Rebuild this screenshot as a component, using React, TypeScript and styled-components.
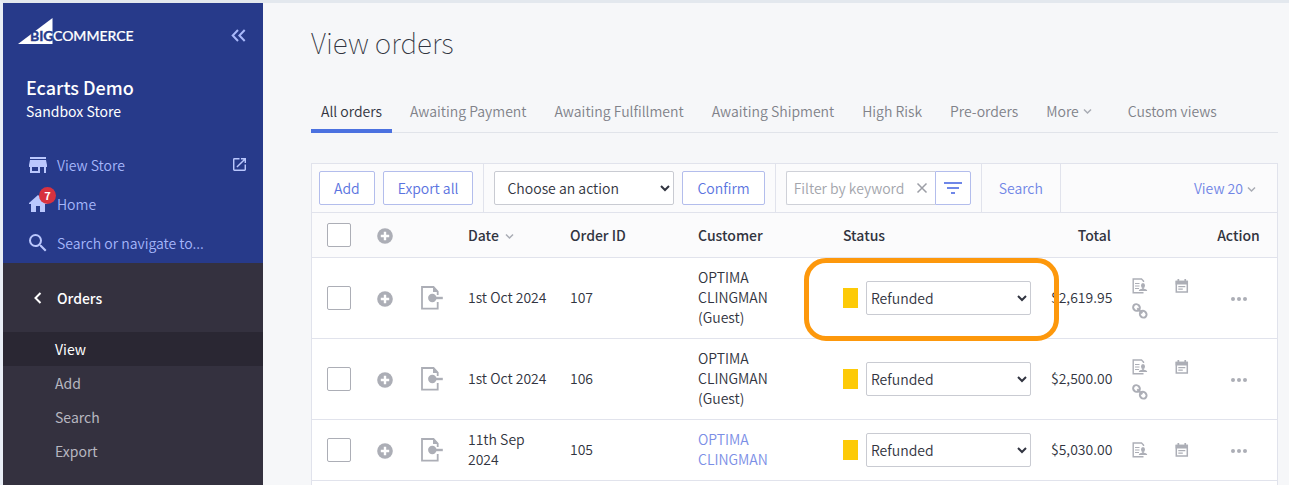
import React from "react";
import styled, { createGlobalStyle } from "styled-components";

const Global = createGlobalStyle`
  *, *::before, *::after { box-sizing: border-box; }
  body {
    margin: 0;
    background: #f6f7f9;
    color: #313440;
    font: 350 14px/20px "Noto Sans CJK JP", "Noto Sans", sans-serif;
  }
  button, input, select { font: inherit; color: inherit; }
  button { cursor: pointer; }
  a { color: inherit; text-decoration: none; }
`;

const Page = styled.div`
  display: flex;
  min-height: 100vh;
  border-top: 3px solid #e3e8ee;
  border-left: 3px solid #e9eef6;
`;

/* Sidebar */
const Sidebar = styled.aside`
  flex: none;
  width: 260px;
  background: #34313f;
  color: #b4baff;
`;
const StorePanel = styled.div`
  height: 260px;
  padding: 15px 15px 0;
  background: #273a8a;
`;
const BrandRow = styled.div`
  display: flex;
  justify-content: space-between;
  align-items: center;
  height: 34px;
  padding-right: 2px;
`;
const IconButton = styled.button`
  display: flex;
  padding: 0;
  border: 0;
  background: none;
  color: #acaeb6;
`;
const StoreName = styled.div`
  padding: 23px 0 0 8px;
  color: #fff;
  font-size: 18px;
  font-weight: 500;
  line-height: 24px;
`;
const StoreKind = styled.div`
  padding-left: 8px;
  color: #fff;
  font-weight: 400;
  line-height: 24px;
`;
const MainNav = styled.nav`
  display: flex;
  flex-direction: column;
  padding-top: 22px;
`;
const NavItem = styled.a`
  display: flex;
  align-items: center;
  gap: 10px;
  height: 39px;
  padding: 0 2px 0 11px;
  color: #a5b6fa;
`;
const NavIcon = styled.span`
  position: relative;
  display: flex;
  color: #bac7fd;
`;
const Grow = styled.span`
  flex: 1;
`;
const Badge = styled.span`
  position: absolute;
  top: -8px;
  left: 10px;
  width: 17px;
  height: 17px;
  border-radius: 50%;
  background: #d8323f;
  color: #fff;
  font-size: 11px;
  font-weight: 700;
  line-height: 17px;
  text-align: center;
`;
const SectionHead = styled.button`
  display: flex;
  align-items: center;
  gap: 13px;
  width: 100%;
  height: 69px;
  padding: 0 30px;
  border: 0;
  background: none;
  color: #fff;
  font-weight: 500;
`;
const SubItem = styled.a<{ $active?: boolean }>`
  display: block;
  padding-left: 52px;
  background: ${(p) => (p.$active ? "#2a2733" : "transparent")};
  color: ${(p) => (p.$active ? "#fff" : "#b7b7c0")};
  font-weight: 400;
  line-height: 34px;
`;

/* Main column */
const Main = styled.main`
  flex: 1;
  min-width: 0;
  display: flex;
  flex-direction: column;
  padding: 19px 11px 0 48px;
`;
const Title = styled.h1`
  margin: 0;
  font-size: 28px;
  font-weight: 100;
  line-height: 40px;
`;
const Tabs = styled.nav`
  display: flex;
  gap: 8px;
  margin: 27px 0 30px;
  border-bottom: 1px solid #e1e4ea;
`;
const Tab = styled.a<{ $active?: boolean; $menu?: boolean }>`
  display: flex;
  align-items: center;
  gap: 4px;
  height: 44px;
  margin-bottom: -1px;
  padding: 3px ${(p) => (p.$menu ? 18 : 10)}px 0 10px;
  border-bottom: 4px solid ${(p) => (p.$active ? "#4b71e0" : "transparent")};
  color: ${(p) => (p.$active ? "#313440" : "#808289")};
  white-space: nowrap;
`;
const Panel = styled.section`
  flex: 1;
  border: 1px solid #e1e3ec;
  border-bottom: 0;
  background: #fff;
`;
const Toolbar = styled.div`
  display: flex;
  height: 49px;
  border-bottom: 1px solid #e1e3ec;
  background: #fbfbfc;
`;
const Group = styled.div<{ $wide?: boolean }>`
  display: flex;
  align-items: center;
  gap: 8px;
  padding: 0 ${(p) => (p.$wide ? 17 : 10)}px;
  border-right: 1px solid #e1e3ec;
  &:first-child { padding-left: 7px; }
  &:last-child { margin-left: auto; padding-right: 21px; border: 0; }
`;
const Button = styled.button`
  height: 34px;
  padding: 0 14px;
  border: 1px solid #b3bdec;
  border-radius: 2px;
  background: #fff;
  color: #5a73e0;
  white-space: nowrap;
`;
const LinkButton = styled.a`
  display: flex;
  align-items: center;
  gap: 4px;
  color: #7186e6;
  white-space: nowrap;
`;
const Select = styled.select<{ $indent?: boolean }>`
  flex: 1;
  min-width: 0;
  width: 100%;
  height: 34px;
  padding: 0 0 0 ${(p) => (p.$indent ? 8 : 0)}px;
  border: 1px solid #c9cbd2;
  border-radius: 2px;
  background: #fff;
`;
const ActionSelect = styled.div`
  display: flex;
  width: 180px;
`;
const Filter = styled.div`
  display: flex;
`;
const FilterField = styled.div`
  display: flex;
  align-items: center;
  width: 149px;
  height: 34px;
  padding: 0 7px;
  border: 1px solid #cfd1d8;
  border-right: 0;
  border-radius: 2px 0 0 2px;
  background: #fff;
`;
const FilterInput = styled.input`
  flex: 1;
  min-width: 0;
  padding: 0;
  border: 0;
  outline: 0;
  background: none;
  &::placeholder { color: #a3a5ac; opacity: 1; }
`;
const FilterButton = styled.button`
  display: grid;
  place-items: center;
  width: 36px;
  height: 34px;
  padding: 0;
  border: 1px solid #b3bdec;
  border-radius: 0 2px 2px 0;
  background: #fff;
  color: #6f87e8;
`;

/* Orders table */
const Table = styled.table`
  width: 100%;
  border-collapse: separate;
  border-spacing: 0;
  table-layout: fixed;
`;
const Cell = styled.td<{ $end?: boolean; $center?: boolean; $roomy?: boolean }>`
  padding: 10px ${(p) => (p.$roomy ? 30 : 10)}px 10px 10px;
  border-bottom: 1px solid #e1e3ec;
  text-align: ${(p) => (p.$end ? "right" : p.$center ? "center" : "left")};
  vertical-align: middle;
`;
const TextCell = styled(Cell)`
  padding-top: 9px;
  padding-bottom: 11px;
`;
const HeadCell = styled(Cell).attrs({ as: "th" })`
  height: 45px;
  background: #fbfbfc;
  font-weight: 500;
`;
const HeadLabel = styled.span`
  display: flex;
  align-items: center;
  gap: 6px;
`;
const Check = styled.input`
  display: block;
  appearance: none;
  width: 24px;
  height: 24px;
  margin: 0 0 0 5px;
  border: 1px solid #acaeb6;
  border-radius: 2px;
  background: #fff;
`;
const ExpandButton = styled(IconButton)`
  padding: 1px 0 0 7px;
`;
const CustomerLink = styled.a`
  color: #7b8ee6;
`;
const StatusBox = styled.div`
  position: relative;
  display: flex;
  align-items: center;
  gap: 8px;
`;
const Swatch = styled.span`
  flex: none;
  width: 15px;
  height: 20px;
  background: #fdca07;
`;
const Highlight = styled.span`
  position: absolute;
  inset: -23px -28px -26px -39px;
  z-index: 1;
  border: 5px solid #fd980c;
  border-radius: 22px;
  pointer-events: none;
`;
const MarkGrid = styled.div`
  display: grid;
  grid-template-columns: 16px 16px;
  align-items: end;
  column-gap: 27px;
  row-gap: 9px;
  padding-left: 1px;
  color: #acaeb6;
`;
const ActionBox = styled.div`
  display: flex;
  justify-content: center;
  padding-top: 2px;
`;

const Chevron = () => (
  <svg width="9" height="9" viewBox="0 0 9 9" fill="none" stroke="#a9acb4" strokeWidth="1.500">
    <path d="M1 3.500L4.500 7 8 3.500" />
  </svg>
);
const LogoSvg = styled.svg`
  align-self: flex-start;
`;
const Logo = () => (
  <LogoSvg width="117" height="27" viewBox="0 0 117 27" role="img" aria-label="BigCommerce">
    <path d="M0 26L34.500 0V26Z" fill="#fff" />
    <text x="12" y="22.500" fontFamily="Lato, sans-serif" fontWeight="700" fontSize="14" fill="#273a8a" stroke="#273a8a" strokeWidth="0.400">BIG</text>
    <text x="35" y="22.500" fontFamily="Lato, sans-serif" fontWeight="500" fontSize="14" fill="#fff" stroke="#fff" strokeWidth="0.200">COMMERCE</text>
  </LogoSvg>
);
const Collapse = () => (
  <svg width="15" height="13" viewBox="0 0 15 13" fill="none" stroke="#a9b9fb" strokeWidth="2">
    <path d="M7 1L1.700 6.500 7 12M13.700 1L8.400 6.500l5.300 5.500" />
  </svg>
);
const StoreIcon = () => (
  <svg width="18" height="18" viewBox="3 3 18 18" fill="currentColor">
    <path d="M20 4H4v2h16V4zm1 10v-2l-1-5H4l-1 5v2h1v6h10v-6h4v6h2v-6h1zm-9 4H6v-4h6v4z" />
  </svg>
);
const HomeIcon = () => (
  <svg width="18" height="18" viewBox="3 3 18 18" fill="currentColor">
    <path d="M10 20v-6h4v6h5v-8h3L12 3 2 12h3v8z" />
  </svg>
);
const SearchIcon = () => (
  <svg width="18" height="18" viewBox="3 3 18 18" fill="currentColor">
    <path d="M15.500 14h-.79l-.28-.27A6.470 6.470 0 0 0 16 9.500 6.500 6.500 0 1 0 9.500 16c1.610 0 3.090-.59 4.230-1.570l.27.28v.79l5 4.990L20.490 19l-4.990-5zm-6 0C7.010 14 5 11.990 5 9.500S7.010 5 9.500 5 14 7.010 14 9.500 11.990 14 9.500 14z" />
  </svg>
);
const ExternalIcon = () => (
  <svg width="13" height="13" viewBox="3 3 18 18" fill="#bac7fd">
    <path d="M19 19H5V5h7V3H5a2 2 0 0 0-2 2v14a2 2 0 0 0 2 2h14c1.100 0 2-.9 2-2v-7h-2v7zM14 3v2h3.590l-9.830 9.830 1.410 1.410L19 6.410V10h2V3h-7z" />
  </svg>
);
const BackIcon = () => (
  <svg width="11" height="12" viewBox="0 0 11 12" fill="none" stroke="#fff" strokeWidth="2">
    <path d="M7.500 1L2.500 6l5 5" />
  </svg>
);
const PlusIcon = () => (
  <svg width="16" height="16" viewBox="0 0 16 16">
    <circle cx="8" cy="8" r="7.800" fill="#acaeb6" />
    <path d="M8 3.800v8.400M3.800 8h8.400" stroke="#fff" strokeWidth="2.400" />
  </svg>
);
const EntryIcon = () => (
  <svg width="22" height="24" viewBox="0 0 22 24" fill="none" stroke="#acaeb6" strokeWidth="1.800">
    <path d="M16.700 9V5.500L12.500 1H1v21.600h15.700V16" />
    <path d="M12 1v5h5" fill="#acaeb6" stroke="none" />
    <circle cx="11.300" cy="12" r="4.200" fill="#acaeb6" stroke="none" />
    <path d="M12 12h9.800" strokeWidth="2.400" />
  </svg>
);
const NoteIcon = () => (
  <svg width="16" height="16" viewBox="0 0 16 16" fill="none" stroke="currentColor" strokeWidth="1.400">
    <path d="M11.500 4V3L9.500 1H1.200v13.800h10.300" />
    <path d="M3 5.500h4.500M3 8h4.500M3 10.500h4" strokeWidth="1" />
    <ellipse cx="11" cy="7.500" rx="2" ry="2.600" fill="currentColor" stroke="none" />
    <path d="M6.800 13c0-1.500 1.500-1.900 3.400-2.200V9.500h1.600v1.300c1.900.3 3.400.7 3.400 2.200z" fill="currentColor" stroke="none" />
  </svg>
);
const CalendarIcon = () => (
  <svg width="14" height="15" viewBox="0 0 14 15" fill="none" stroke="currentColor" strokeWidth="1.500">
    <path d="M1.300 2.500h11v10.500h-11z" />
    <path d="M.6 1.800h12.400v3.700H.6zM2.500 0h1.700v3H2.500zM9.400 0h1.700v3H9.400z" fill="currentColor" stroke="none" />
    <path d="M3.300 7.700h7M3.300 10.200h4.500" strokeWidth="1.300" />
  </svg>
);
const LinkIcon = () => (
  <svg width="16" height="16" viewBox="0 0 16 16" fill="none" stroke="currentColor" strokeWidth="2">
    <ellipse cx="4.500" cy="4.500" rx="3.500" ry="3.200" transform="rotate(45 4.500 4.500)" />
    <ellipse cx="11.200" cy="11.200" rx="3.500" ry="3.200" transform="rotate(45 11.200 11.200)" />
    <path d="M5.300 5.300l5 5" />
  </svg>
);
const DotsIcon = () => (
  <svg width="16" height="4" viewBox="0 0 16 4" fill="currentColor">
    <circle cx="2" cy="2" r="2" />
    <circle cx="8" cy="2" r="2" />
    <circle cx="14" cy="2" r="2" />
  </svg>
);

const tabs = ["All orders", "Awaiting Payment", "Awaiting Fulfillment", "Awaiting Shipment", "High Risk", "Pre-orders"];
const columns = [48, 51, 47, 102, 128, undefined, 208, 80, 79, 77];
const orders = [
  { id: "107", date: "1st Oct 2024", customer: "OPTIMA CLINGMAN (Guest)", guest: true, total: "$2,619.95" },
  { id: "106", date: "1st Oct 2024", customer: "OPTIMA CLINGMAN (Guest)", guest: true, total: "$2,500.00" },
  { id: "105", date: "11th Sep 2024", customer: "OPTIMA CLINGMAN", guest: false, total: "$5,030.00" },
];

export default function App() {
  return (
    <Page>
      <Global />
      <Sidebar>
        <StorePanel>
          <BrandRow>
            <Logo />
            <IconButton aria-label="Collapse menu"><Collapse /></IconButton>
          </BrandRow>
          <StoreName>Ecarts Demo</StoreName>
          <StoreKind>Sandbox Store</StoreKind>
          <MainNav>
            <NavItem href="#store"><NavIcon><StoreIcon /></NavIcon>View Store<Grow /><ExternalIcon /></NavItem>
            <NavItem href="#home"><NavIcon><HomeIcon /><Badge>7</Badge></NavIcon>Home</NavItem>
            <NavItem href="#search"><NavIcon><SearchIcon /></NavIcon>Search or navigate to...</NavItem>
          </MainNav>
        </StorePanel>
        <SectionHead><BackIcon />Orders</SectionHead>
        <SubItem href="#view" $active>View</SubItem>
        <SubItem href="#add">Add</SubItem>
        <SubItem href="#find">Search</SubItem>
        <SubItem href="#export">Export</SubItem>
      </Sidebar>
      <Main>
        <Title>View orders</Title>
        <Tabs>
          {tabs.map((t, i) => <Tab key={t} href="#tab" $active={i === 0}>{t}</Tab>)}
          <Tab href="#more" $menu>More <Chevron /></Tab>
          <Tab href="#custom">Custom views</Tab>
        </Tabs>
        <Panel>
          <Toolbar>
            <Group>
              <Button>Add</Button>
              <Button>Export all</Button>
            </Group>
            <Group>
              <ActionSelect>
                <Select $indent aria-label="Action"><option>Choose an action</option></Select>
              </ActionSelect>
              <Button>Confirm</Button>
            </Group>
            <Group>
              <Filter>
                <FilterField>
                  <FilterInput placeholder="Filter by keyword" aria-label="Filter by keyword" />
                  <IconButton aria-label="Clear">
                    <svg width="12" height="12" viewBox="0 0 12 12" stroke="#9c9ea6" strokeWidth="1.500"><path d="M1.500 1.500l9 9M10.500 1.500l-9 9" /></svg>
                  </IconButton>
                </FilterField>
                <FilterButton aria-label="Filter">
                  <svg width="18" height="12" viewBox="0 0 18 12" stroke="currentColor" strokeWidth="2"><path d="M0 1h18M3 6h12M7 11h4" /></svg>
                </FilterButton>
              </Filter>
            </Group>
            <Group $wide><LinkButton href="#search-orders">Search</LinkButton></Group>
            <Group $wide><LinkButton href="#page-size">View 20 <Chevron /></LinkButton></Group>
          </Toolbar>
          <Table>
            <colgroup>{columns.map((w, i) => <col key={i} width={w} />)}</colgroup>
            <thead>
              <tr>
                <HeadCell><Check type="checkbox" aria-label="Select all orders" /></HeadCell>
                <HeadCell><ExpandButton aria-label="Expand all"><PlusIcon /></ExpandButton></HeadCell>
                <HeadCell />
                <HeadCell><HeadLabel>Date <Chevron /></HeadLabel></HeadCell>
                <HeadCell>Order ID</HeadCell>
                <HeadCell>Customer</HeadCell>
                <HeadCell>Status</HeadCell>
                <HeadCell $end>Total</HeadCell>
                <HeadCell />
                <HeadCell $center>Action</HeadCell>
              </tr>
            </thead>
            <tbody>
              {orders.map((o, i) => (
                <tr key={o.id}>
                  <Cell><Check type="checkbox" aria-label={`Select order ${o.id}`} /></Cell>
                  <Cell><ExpandButton aria-label={`Expand order ${o.id}`}><PlusIcon /></ExpandButton></Cell>
                  <Cell><IconButton aria-label="Order source"><EntryIcon /></IconButton></Cell>
                  <TextCell>{o.date}</TextCell>
                  <TextCell>{o.id}</TextCell>
                  <TextCell $roomy>{o.guest ? o.customer : <CustomerLink href="#customer">{o.customer}</CustomerLink>}</TextCell>
                  <Cell>
                    <StatusBox>
                      <Swatch />
                      <Select aria-label={`Status of order ${o.id}`}><option>Refunded</option></Select>
                      {i === 0 && <Highlight />}
                    </StatusBox>
                  </Cell>
                  <TextCell $end>{o.total}</TextCell>
                  <Cell>
                    <MarkGrid>
                      <NoteIcon />
                      <CalendarIcon />
                      {o.guest && <LinkIcon />}
                    </MarkGrid>
                  </Cell>
                  <Cell>
                    <ActionBox><IconButton aria-label="More actions"><DotsIcon /></IconButton></ActionBox>
                  </Cell>
                </tr>
              ))}
            </tbody>
          </Table>
        </Panel>
      </Main>
    </Page>
  );
}
